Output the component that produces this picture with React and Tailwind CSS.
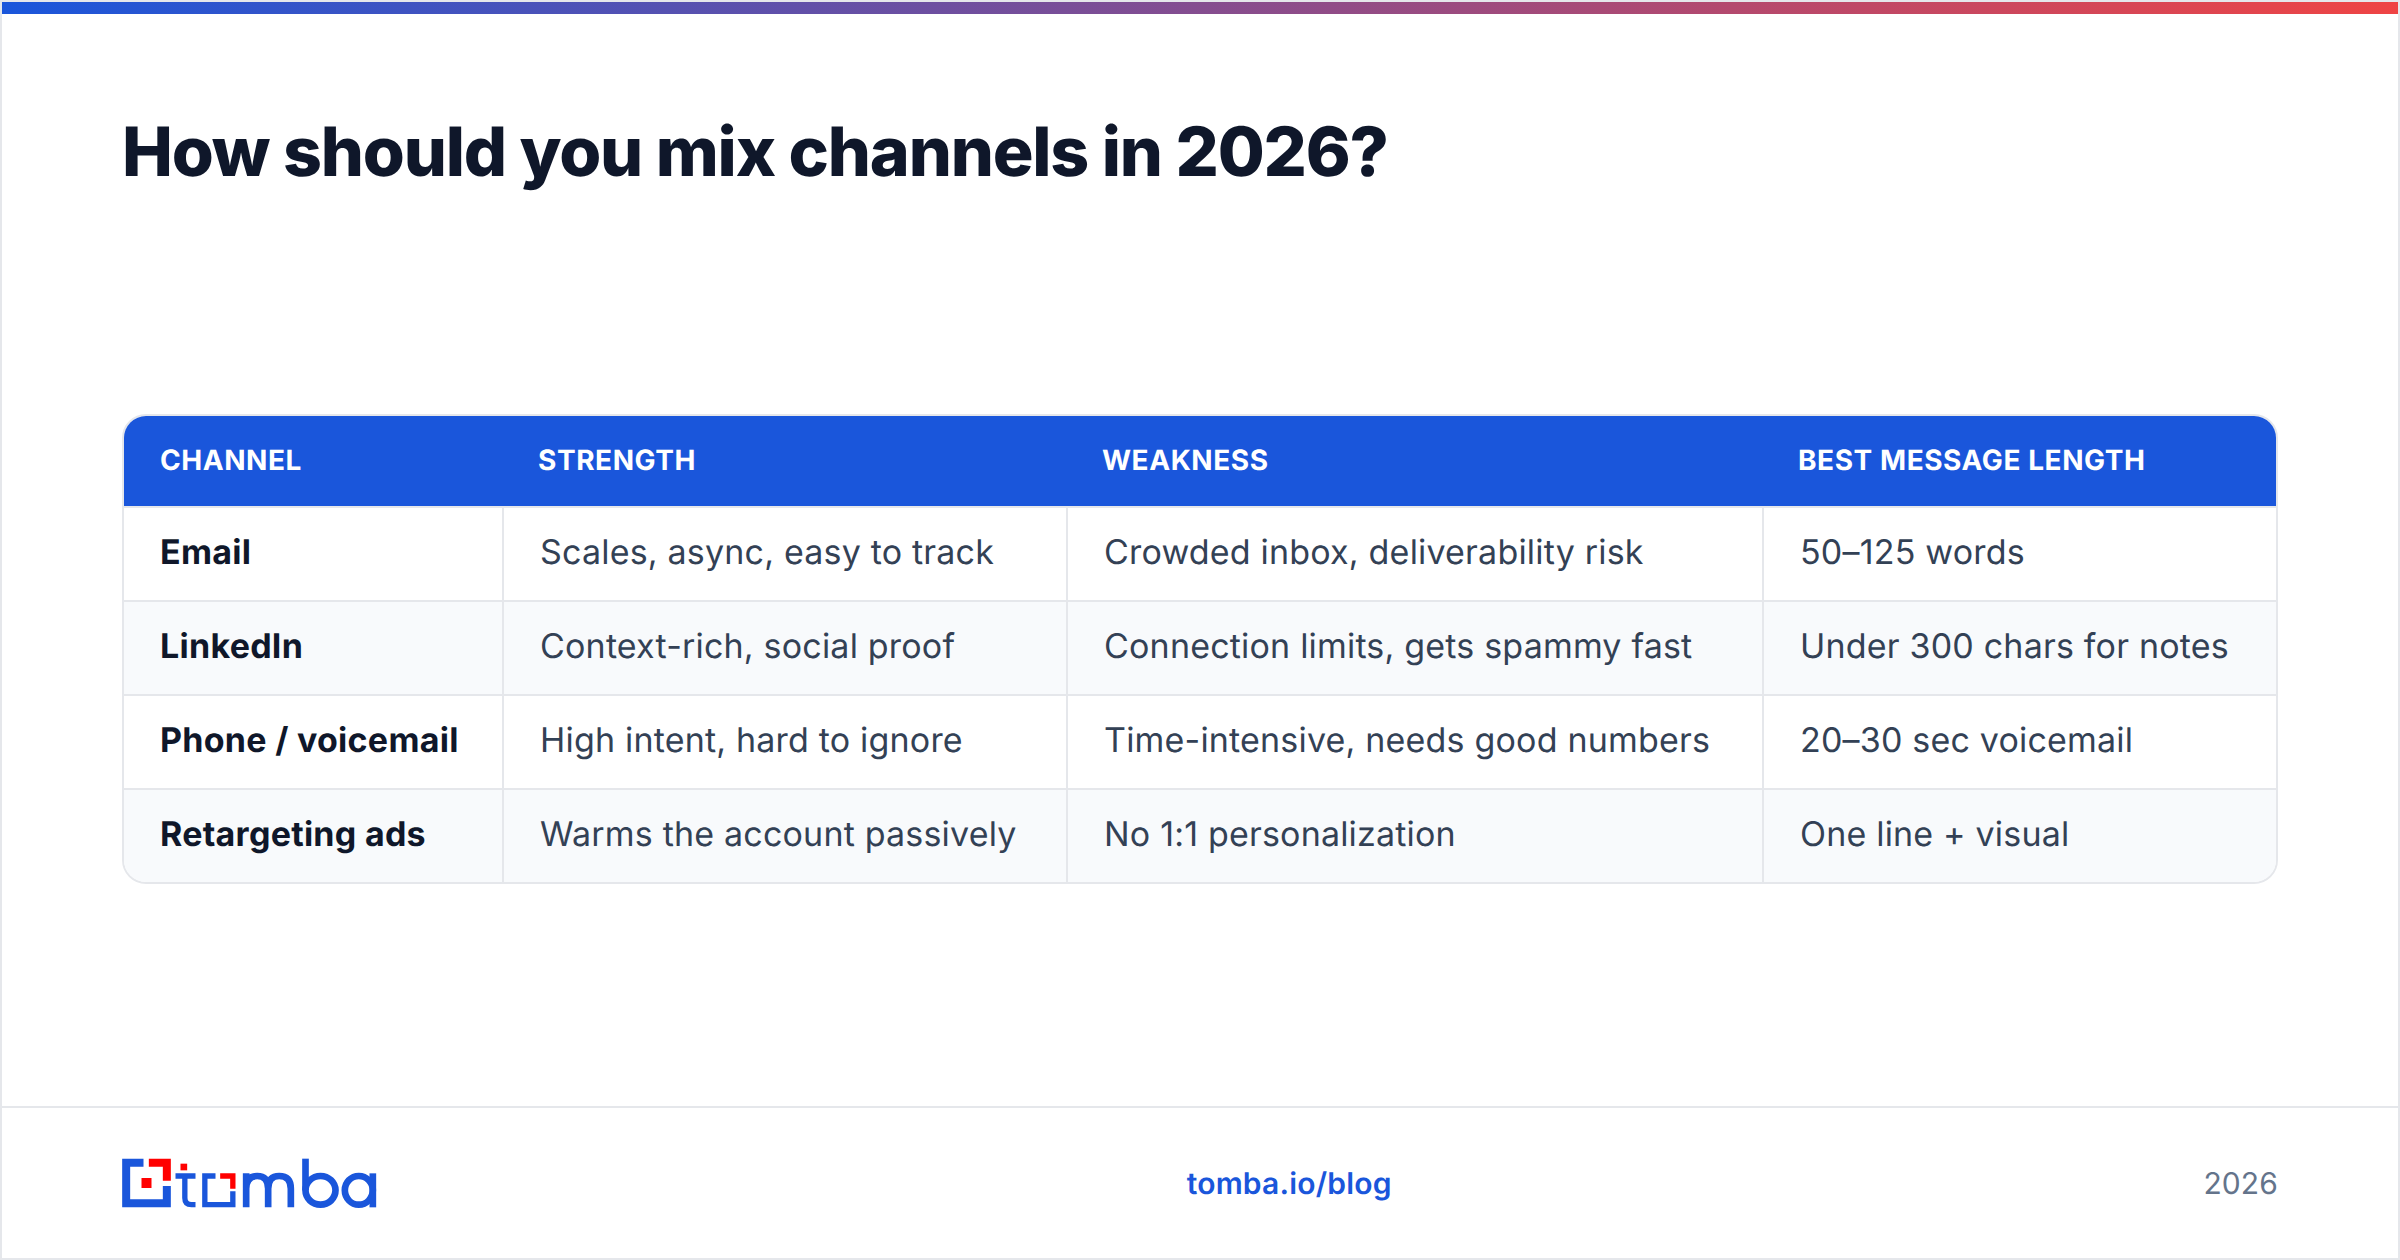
const ROWS = [
  ['Email', 'Scales, async, easy to track', 'Crowded inbox, deliverability risk', '50–125 words'],
  ['LinkedIn', 'Context-rich, social proof', 'Connection limits, gets spammy fast', 'Under 300 chars for notes'],
  ['Phone / voicemail', 'High intent, hard to ignore', 'Time-intensive, needs good numbers', '20–30 sec voicemail'],
  ['Retargeting ads', 'Warms the account passively', 'No 1:1 personalization', 'One line + visual'],
];

const HEADERS = ['Channel', 'Strength', 'Weakness', 'Best message length'];

function Logo() {
  return (
    <svg width="255" height="50" viewBox="126 112 764 150" fill="none">
      {/* mark */}
      <path d="M190 114H126V260H272V196H248V236H150V138H190Z" fill="#1a56db" />
      <path d="M206 114H272V180H248V138H206Z" fill="#ff0000" />
      <rect x="184" y="172" width="30" height="30" fill="#ff0000" />
      {/* t */}
      <rect x="301" y="129" width="20" height="20" fill="#ff0000" />
      <path d="M286 166H346M314 158V232Q314 252 334 252H346" stroke="#1a56db" strokeWidth="16" />
      {/* o */}
      <path d="M406 158H366V260H466V212H450V244H382V174H406Z" fill="#1a56db" />
      <path d="M420 158H466V204H450V174H420Z" fill="#ff0000" />
      {/* m */}
      <path d="M498 260V158M498 204Q498 166 531 166Q564 166 564 204V260M564 204Q564 166 597 166Q632 166 632 204V260" stroke="#1a56db" strokeWidth="20" />
      {/* b */}
      <path d="M676 114V209" stroke="#1a56db" strokeWidth="20" />
      <ellipse cx="721" cy="209" rx="45" ry="43" stroke="#1a56db" strokeWidth="20" />
      {/* a */}
      <ellipse cx="836" cy="209" rx="42" ry="43" stroke="#1a56db" strokeWidth="20" />
      <path d="M878 158V260" stroke="#1a56db" strokeWidth="20" />
    </svg>
  );
}

export default function App() {
  return (
    <div className="w-[2400px] h-[1260px] bg-white border-2 border-[#e5e7eb] flex flex-col font-['Inter',sans-serif] [text-rendering:geometricPrecision]">
      <div className="h-3 shrink-0 bg-[linear-gradient(to_right,#1a56db,#ef4444)]" />

      <h1 className="px-[120px] pt-[95px] text-[68px] leading-[86px] font-extrabold tracking-[-1.2px] text-[#0f172a]">
        How should you mix channels in 2026?
      </h1>

      <div className="flex-1 flex items-center px-[120px] pb-[3px]">
        <div className="w-full rounded-3xl border-2 border-[#e5e7eb] overflow-hidden">
          <table className="w-full table-fixed border-separate border-spacing-0">
            <colgroup>
              <col className="w-[378px]" />
              <col className="w-[564px]" />
              <col className="w-[696px]" />
              <col />
            </colgroup>
            <thead>
              <tr className="bg-[#1a56db]">
                {HEADERS.map((h) => (
                  <th key={h} className="h-[90px] px-9 pb-0.5 text-left text-[28px] font-bold uppercase tracking-[0.56px] text-white">
                    {h}
                  </th>
                ))}
              </tr>
            </thead>
            <tbody>
              {ROWS.map((row, i) => (
                <tr key={row[0]} className={i % 2 === 1 || i === 3 ? 'bg-[#f8fafc]' : 'bg-white'}>
                  {row.map((cell, j) => (
                    <td
                      key={cell}
                      className={`h-[94px] px-9 pb-1 border-t-2 border-[#e5e7eb] text-[34px] whitespace-nowrap ${
                        j === 0 ? 'font-bold tracking-[0.27px] text-[#0f172a]' : 'border-l-2 tracking-[0.19px] text-[#334155]'
                      }`}
                    >
                      {cell}
                    </td>
                  ))}
                </tr>
              ))}
            </tbody>
          </table>
        </div>
      </div>

      <footer className="h-[152px] shrink-0 border-t-2 border-[#e5e7eb] px-[120px] flex justify-between items-center">
        <Logo />
        <span className="text-[30px] font-semibold tracking-[0.2px] text-[#1a56db] pt-0.5 pr-0.5">tomba.io/blog</span>
        <span className="text-[30px] tracking-[0.1px] text-[#64748b] pt-0.5">2026</span>
      </footer>
    </div>
  );
}
